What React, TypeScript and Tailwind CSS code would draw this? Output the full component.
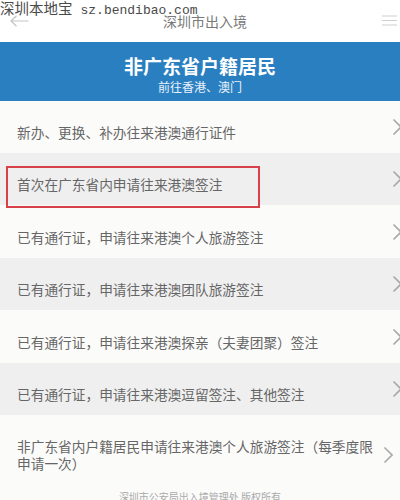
const items = [
  "新办、更换、补办往来港澳通行证件",
  "首次在广东省内申请往来港澳签注",
  "已有通行证，申请往来港澳个人旅游签注",
  "已有通行证，申请往来港澳团队旅游签注",
  "已有通行证，申请往来港澳探亲（夫妻团聚）签注",
  "已有通行证，申请往来港澳逗留签注、其他签注",
];

const heights = ["h-[52px]", "h-[52px]", "h-[53px]", "h-[52px]", "h-[53px]", "h-[52px]"];

function Chevron() {
  return (
    <svg width="10" height="18" viewBox="0 0 10 18" className="ml-auto mr-[-2px] shrink-0">
      <path d="M1.5 1.5 L9 9 L1.5 16.5" fill="none" stroke="#a9a9a9" strokeWidth="1.6" />
    </svg>
  );
}

export default function App() {
  return (
    <div className="relative h-[500px] w-[400px] overflow-hidden bg-[#fbfbfa] font-['Noto_Sans_CJK_SC',sans-serif]">
      {/* site watermark */}
      <div className="absolute left-0 top-[-1px] z-20 flex items-baseline gap-[8px] whitespace-nowrap text-[#4a4a4a]">
        <span className="text-[14.5px] leading-[18px]">深圳本地宝</span>
        <span className="font-['Liberation_Mono',monospace] text-[13px] leading-[18px]">sz.bendibao.com</span>
      </div>

      <header className="flex h-[42px] items-center justify-between bg-white px-[10px]">
        <svg width="19" height="12" viewBox="0 0 19 12">
          <path d="M18.5 6 H1 M6.5 0.8 L1 6 L6.5 11.2" fill="none" stroke="#c4c4c4" strokeWidth="1.2" />
        </svg>
        <div className="text-[14px] leading-[18px] text-[#7a7a7a]">深圳市出入境</div>
        <svg width="17" height="12" viewBox="0 0 17 12" className="mr-[-8px]">
          <path d="M1 1 H16 M1 5.5 H16 M1 10 H16" fill="none" stroke="#cfcfcf" strokeWidth="1" />
        </svg>
      </header>

      <div className="flex h-[59px] flex-col items-center bg-[#2a7fc1] pt-[13px] text-white">
        <div className="text-[19px] font-bold leading-[22px]">非广东省户籍居民</div>
        <div className="mt-[3px] text-[12px] leading-[14px] text-white/90">前往香港、澳门</div>
      </div>

      {items.map((t, i) => (
        <div
          key={t}
          className={`relative flex items-center pl-[17px] ${heights[i]} ${i % 2 === 1 ? "bg-[#efefef]" : "bg-[#fbfbfa]"} ${i === 1 ? "z-10" : ""}`}
        >
          <span className="pt-[10px] text-[13.7px] leading-[18px] text-[#666]">{t}</span>
          <Chevron />
          {i === 1 && (
            <div className="absolute left-[6px] top-[13px] h-[42px] w-[254px] border-2 border-[#d8404a]" />
          )}
        </div>
      ))}

      <div className="flex h-[70px] items-start pl-[17px] pt-[23px]">
        <span className="w-[366px] text-[13.7px] leading-[17px] text-[#666]">
          非广东省内户籍居民申请往来港澳个人旅游签注（每季度限申请一次）
        </span>
        <div className="mt-[8px] flex">
          <Chevron />
        </div>
      </div>

      <div className="mt-[6px] text-center text-[10px] leading-[12px] text-[#aaa]">
        深圳市公安局出入境管理处 版权所有
      </div>
    </div>
  );
}
